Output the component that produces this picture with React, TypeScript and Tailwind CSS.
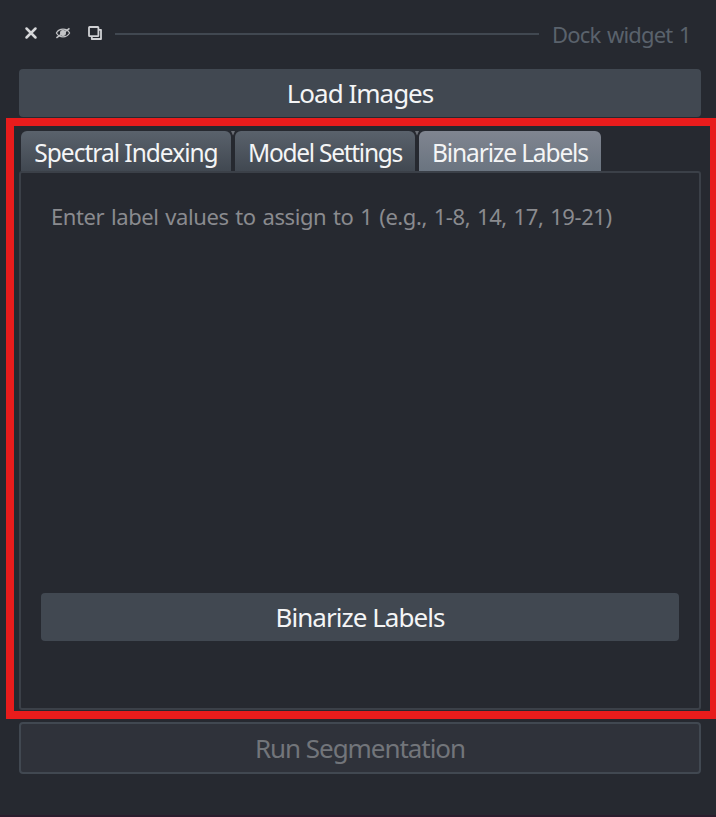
function CloseIcon() {
  return (
    <svg width="14" height="14" viewBox="0 0 14 14" fill="none" stroke="#d6d7d9" strokeWidth="2.5" strokeLinecap="round">
      <path d="M2.5 2.5 11.5 11.5M11.5 2.5 2.5 11.5" />
    </svg>
  );
}

function HiddenIcon() {
  return (
    <svg width="16" height="14" viewBox="0 0 16 14" fill="none" stroke="#c3c4c7" strokeWidth="1.2">
      <path d="M1.4 7C4.2 1.9 11.8 1.9 14.6 7C11.8 12.1 4.2 12.1 1.4 7Z" />
      <circle cx="8" cy="7" r="2.4" fill="#c3c4c7" />
      <path d="M1.4 11.9 14.5 2.3" strokeWidth="1.6" />
    </svg>
  );
}

function FloatIcon() {
  return (
    <svg width="14" height="14" viewBox="0 0 14 14" fill="none" stroke="#d0d1d4" strokeWidth="1.8" strokeLinejoin="round">
      <rect x="1" y="1" width="9.4" height="9.2" rx="0.6" />
      <path d="M10.5 3.8H13V13H3.8V10.5" />
    </svg>
  );
}

function TabNotch() {
  return (
    <svg className="w-1 shrink-0" width="4" height="5" viewBox="0 0 4 5">
      <path d="M0 0H4L2 4.5Z" fill="#6a6e75" />
    </svg>
  );
}

const tab = "flex h-10 shrink-0 items-center justify-center rounded-t-[6px] whitespace-nowrap bg-linear-to-b pt-[3px] text-[24.5px]";

export default function App() {
  return (
    <div className="relative flex h-[817px] w-[716px] flex-col overflow-hidden border-b-2 border-[#2a1d2d] bg-[#262930] px-[15px] text-[26px] leading-[30px] text-[#f4f5f6] font-['Noto_Sans',sans-serif] [word-spacing:1.5px]">
      <header className="flex h-[69px] items-center pl-[9px]">
        <div className="flex items-center gap-[17px] pb-[3px]">
          <CloseIcon />
          <HiddenIcon />
          <FloatIcon />
        </div>
        <div className="mb-0.5 ml-[13px] h-0.5 w-[424px] shrink-0 bg-[#414851]" />
        <span className="ml-[13px] whitespace-nowrap pb-px text-[22px] tracking-[-0.8px] text-[#5a626c]">Dock widget 1</span>
      </header>

      <button className="mx-1 flex h-12 w-[682px] shrink-0 items-center justify-center rounded-[4px] bg-[#414851] pb-px">
        <span className="tracking-[-1px]">Load Images</span>
      </button>

      <section className="mx-1 mt-[14px] w-[682px] shrink-0">
        <nav className="flex pl-0.5">
          <button className={`${tab} w-[210px] from-[#5a626c] to-[#414851]`}>
            <span className="tracking-[-1px]">Spectral Indexing</span>
          </button>
          <TabNotch />
          <button className={`${tab} w-[180px] from-[#5a626c] to-[#414851]`}>
            <span className="tracking-[-1.27px]">Model Settings</span>
          </button>
          <TabNotch />
          <button className={`${tab} w-[182px] from-[#808590] to-[#6a7480]`}>
            <span className="tracking-[-1.13px]">Binarize Labels</span>
          </button>
        </nav>
        <div className="flex h-[539px] flex-col rounded-[3px] border-2 border-[#3b4048] px-5 pt-[28px]">
          <p className="h-[392px] whitespace-nowrap pl-[10px] text-[22px] tracking-[-0.42px] text-[#8a8b8f]">Enter label values to assign to 1 (e.g., 1-8, 14, 17, 19-21)</p>
          <button className="flex h-12 w-[638px] shrink-0 items-center justify-center rounded-[4px] bg-[#414851] pb-px">
            <span className="tracking-[-0.97px]">Binarize Labels</span>
          </button>
        </div>
      </section>

      <button className="mx-1 mt-3 flex h-[52px] w-[682px] shrink-0 items-center justify-center rounded-[4px] border-2 border-[#414851] bg-[#2f323a] pb-px text-[#72757a]">
        <span className="tracking-[-1.05px]">Run Segmentation</span>
      </button>

      <div className="pointer-events-none absolute top-[118px] left-[6px] h-[601px] w-[712px] border-8 border-[#e81c1c]" />
    </div>
  );
}
